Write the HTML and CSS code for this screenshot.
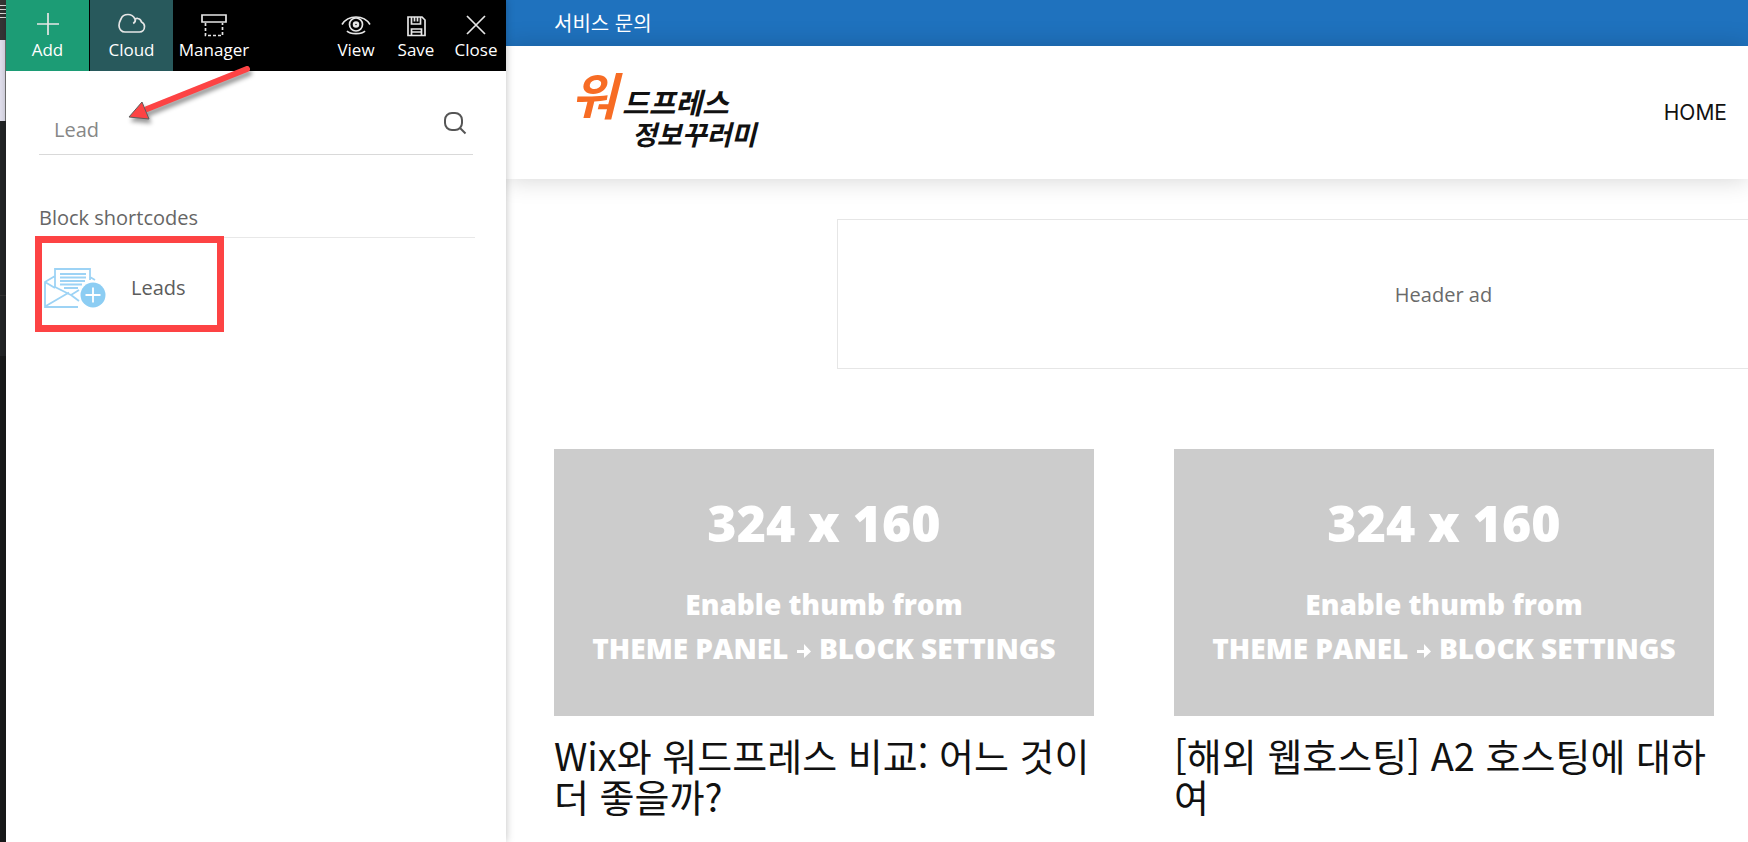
FILE: index.html
```html
<!DOCTYPE html>
<html lang="ko">
<head>
<meta charset="utf-8">
<meta name="viewport" content="width=device-width, initial-scale=1">
<title>워드프레스 정보꾸러미</title>
<link rel="stylesheet" href="styles.css">
</head>
<body>
<div class="app">
  <div class="edge" aria-hidden="true">
    <div class="edge-menu"></div>
    <div class="edge-light"></div>
    <div class="edge-items"></div>
  </div>

  <aside class="panel">
    <nav class="toolbar">
      <button class="tool tool-add" type="button">
        <svg width="28" height="28" viewBox="0 0 28 28"><path d="M14 3v22M3 14h22"/></svg>
        <span>Add</span>
      </button>
      <button class="tool tool-cloud" type="button">
        <svg width="30" height="28" viewBox="0 0 30 28"><path d="M8 22C4.500 22 2 19 2 15.500 2 12 3.500 10 4 9 5 6 8 4.500 11 4.500c3 0 5.500 1.500 7 4.500 1-.5 2-.7 3-.5 2 .3 3 1.700 3.500 3.500 2 1 3 2.500 3 4.500 0 3-2 5.500-5 5.500zM18 9c.8 1.800-.2 3.500-1.800 4.500"/></svg>
        <span>Cloud</span>
      </button>
      <button class="tool tool-manager" type="button">
        <svg width="28" height="28" viewBox="0 0 28 28"><path d="M2 5h24v7H2z"/><path d="M5.500 13v12.500h17V13" stroke-dasharray="3 2"/></svg>
        <span>Manager</span>
      </button>
      <div class="tool-spacer"></div>
      <button class="tool" type="button">
        <svg width="30" height="28" viewBox="0 0 30 28"><path d="M1 14.500C5 8 10 7 15 7s10 1 14 7.500M6 21c3 3.500 15 3.500 18 0"/><circle cx="15" cy="14.500" r="6.500"/><circle cx="15" cy="14.500" r="2" stroke-width="2.500"/></svg>
        <span>View</span>
      </button>
      <button class="tool" type="button">
        <svg width="28" height="28" viewBox="0 0 28 28"><path d="M6 7h14l3 3v15.500H6zM9.500 7v7h9V7M12.500 7v4.500M15.500 7v4.500M9.500 25.500V19h10v6.500M9.500 22h10"/></svg>
        <span>Save</span>
      </button>
      <button class="tool" type="button">
        <svg width="28" height="28" viewBox="0 0 28 28"><path d="M5 6l18 18M23 6L5 24"/></svg>
        <span>Close</span>
      </button>
    </nav>

    <form class="search">
      <input class="search-input" type="text" value="Lead" aria-label="Search blocks">
      <button class="search-button" type="submit" aria-label="Search">
        <svg width="24" height="24" viewBox="0 0 24 24"><rect x="2" y="2" width="17" height="17" rx="7"/><path d="M17 17l5.500 5.500"/></svg>
      </button>
    </form>

    <section class="blocks">
      <h2 class="blocks-title">Block shortcodes</h2>
      <button class="block" type="button">
        <svg class="block-icon" width="64" height="42" viewBox="0 0 64 42">
          <path d="M12 20V2h35v11M12 9L2 15v25h33M2 15l10 6M2 39.500l24-14M12 20l16 8 8-5M47 10l5 3M28 28l8 6" stroke-width="1.800"/>
          <path d="M17 7h26M17 10.500h26M17 14h25M17 17.500h22M21 21h14" stroke-width="1.800"/>
          <circle cx="50" cy="28" r="12.500" fill="#8ccdf3" stroke="none"/>
          <path d="M50 20.500v15M42.500 28h15" stroke="#fff" stroke-width="1.800"/>
        </svg>
        <span>Leads</span>
      </button>
    </section>

    <svg class="pointer" width="136" height="64" viewBox="0 0 136 64" aria-hidden="true">
      <path d="M126 9L26 49" stroke="#fd4344" stroke-width="6" stroke-linecap="round"/>
      <path d="M8 57L21 42l7 17z" fill="#fd4344"/>
    </svg>
  </aside>

  <main class="site">
    <div class="topbar"><a href="#">서비스 문의</a></div>
    <header class="header">
      <a class="logo" href="#" aria-label="워드프레스 정보꾸러미">
        <svg width="200" height="96" viewBox="0 0 200 96">
          <text class="logo-accent" x="1" y="50">워</text>
          <text class="logo-text" x="52" y="49">드프레스</text>
          <text class="logo-text logo-text-small" x="62" y="80">정보꾸러미</text>
        </svg>
      </a>
      <nav><a class="nav-link" href="#">HOME</a></nav>
    </header>
    <div class="content">
      <div class="header-ad">Header ad</div>
      <div class="cards">
        <article class="card">
          <a class="thumb" href="#">
            <strong class="thumb-size">324 x 160</strong>
            <span>Enable thumb from</span>
            <span>THEME PANEL <svg width="16" height="16" viewBox="0 0 16 16"><path d="M1 7h7V1l7 7.500L8 15V10H1z"/></svg> BLOCK SETTINGS</span>
          </a>
          <h3 class="card-title"><a href="#">Wix와 워드프레스 비교: 어느 것이 더 좋을까?</a></h3>
        </article>
        <article class="card">
          <a class="thumb" href="#">
            <strong class="thumb-size">324 x 160</strong>
            <span>Enable thumb from</span>
            <span>THEME PANEL <svg width="16" height="16" viewBox="0 0 16 16"><path d="M1 7h7V1l7 7.500L8 15V10H1z"/></svg> BLOCK SETTINGS</span>
          </a>
          <h3 class="card-title"><a href="#">[해외 웹호스팅] A2 호스팅에 대하여</a></h3>
        </article>
      </div>
    </div>
  </main>
</div>
</body>
</html>
```

FILE: styles.css
```css
* {
  box-sizing: border-box;
}

body {
  margin: 0;
  background: #fff;
  color: #5c5c5c;
  font-family: "Open Sans", "Noto Sans CJK KR", sans-serif;
  font-size: 20px;
}

a {
  color: inherit;
  text-decoration: none;
}

button {
  padding: 0;
  border: 0;
  background: none;
  color: inherit;
  font: inherit;
}

svg {
  flex: none;
  fill: none;
  stroke: currentColor;
}

.app {
  display: flex;
  min-height: 100vh;
  overflow: hidden;
}

/* Admin menu edge */
.edge {
  display: flex;
  flex: 0 0 6px;
  flex-direction: column;
  background: #191a1b;
}

.edge-menu {
  height: 40px;
  background: repeating-linear-gradient(#ddd 0 1px, #333 1px 4px) 0 5px / 100% 14px no-repeat #363636;
}

.edge-light {
  height: 81px;
  border-right: 1px solid #777;
  background: #e4e2f0;
}

.edge-items {
  height: 235px;
  background: linear-gradient(#333, #333) 0 174px / 100% 1px no-repeat #232527;
}

/* Composer panel */
.panel {
  position: relative;
  z-index: 1;
  flex: 0 0 500px;
  background: #fff;
  box-shadow: 0 0 8px rgba(0, 0, 0, 0.25);
}

.toolbar {
  display: flex;
  height: 71px;
  background: #000;
}

.tool {
  display: flex;
  flex: 0 0 60px;
  flex-direction: column;
  align-items: center;
  padding-top: 10px;
  color: #fff;
  font-size: 17px;
  line-height: 24px;
}

.tool svg {
  stroke: #e6e6e6;
  stroke-width: 1.7;
}

.tool-add {
  flex-basis: 83px;
  margin-right: 1px;
  background: #1c9c75;
}

.tool-cloud {
  flex-basis: 83px;
  background: #28595c;
}

.tool-manager {
  flex-basis: 82px;
}

.tool-spacer {
  flex: 1;
}

.search {
  display: flex;
  align-items: center;
  height: 56px;
  margin: 28px 33px 0;
  padding: 0 6px 8px 15px;
  border-bottom: 1px solid #d9d9d9;
}

.search-input {
  flex: 1;
  min-width: 0;
  height: 36px;
  margin-top: 14px;
  padding: 0;
  border: 0;
  outline: 0;
  background: none;
  color: #878787;
  font: inherit;
}

.search-button {
  display: flex;
  color: #555;
}

.search-button svg {
  stroke-width: 2;
}

.blocks {
  margin: 48px 31px 0 33px;
}

.blocks-title {
  margin: 0;
  height: 35px;
  border-bottom: 1px solid #e8e8e8;
  color: #666;
  font-size: 20px;
  font-weight: 400;
  line-height: 30px;
}

.block {
  display: flex;
  align-items: center;
  gap: 24px;
  width: 189px;
  height: 96px;
  margin: -2px 0 0 -4px;
  padding: 7px 0 0 1px;
  border: 7px solid #fd4344;
  background: #fff;
}

.block-icon {
  color: #9dd3f5;
}

.pointer {
  position: absolute;
  top: 60px;
  left: 115px;
  filter: drop-shadow(2px 4px 2px rgba(0, 0, 0, 0.4));
  pointer-events: none;
}

/* Site preview */
.site {
  flex: 1;
  min-width: 0;
  overflow: hidden;
}

.topbar {
  padding-left: 48px;
  background: #1f72be;
  color: #fff;
  font-family: "Noto Sans CJK KR", sans-serif;
  font-size: 20px;
  line-height: 46px;
}

.header {
  display: flex;
  align-items: center;
  justify-content: space-between;
  height: 133px;
  padding: 0 21px 0 64px;
  box-shadow: 0 0 24px rgba(0, 0, 0, 0.18);
}

.logo {
  display: flex;
}

.logo svg {
  overflow: visible;
}

.logo text {
  stroke: none;
  font-family: "Noto Sans CJK KR", sans-serif;
  font-style: italic;
}

.logo-accent {
  fill: #f76c24;
  font-size: 50px;
  font-weight: 700;
}

.logo-text {
  fill: #111;
  font-size: 29px;
  font-weight: 700;
}

.logo-text-small {
  font-size: 27px;
}

.nav-link {
  color: #111;
  font-family: Inter, sans-serif;
  font-size: 21px;
}

.content {
  padding: 40px 34px 0 48px;
}

.header-ad {
  display: grid;
  place-items: center;
  height: 150px;
  margin: 0 -336px 80px 283px;
  border: 1px solid #e6e6e6;
  color: #6a6a6a;
}

.cards {
  display: grid;
  grid-template-columns: 1fr 1fr;
  gap: 80px;
}

.thumb {
  display: flex;
  flex-direction: column;
  align-items: center;
  justify-content: center;
  padding-top: 2px;
  aspect-ratio: 324 / 160;
  background: #ccc;
  color: #fff;
  font-size: 28px;
  font-weight: 800;
  line-height: 44px;
  white-space: nowrap;
}

.thumb-size {
  margin-bottom: 32px;
  font-size: 50px;
  font-weight: 800;
  line-height: 54px;
}

.thumb svg {
  fill: #fff;
  stroke: none;
}

.card-title {
  margin: 18px 0 0;
  color: #111;
  font-family: "Noto Sans CJK KR", sans-serif;
  font-size: 38px;
  font-weight: 400;
  line-height: 41px;
}
```
